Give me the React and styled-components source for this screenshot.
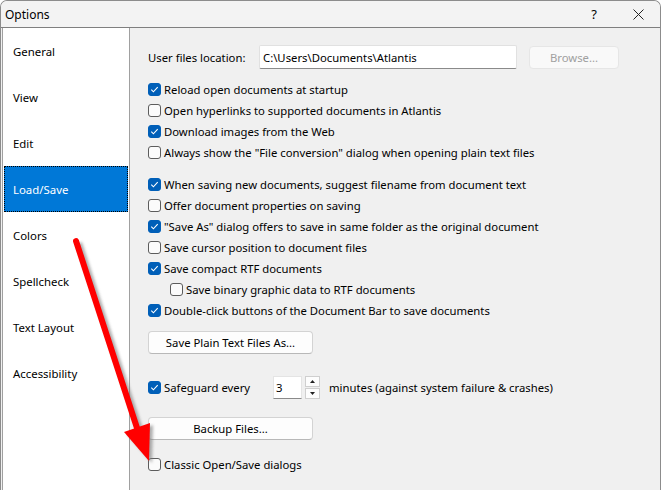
import styled, { createGlobalStyle } from "styled-components";

const GlobalStyle = createGlobalStyle`
  body {
    margin: 0;
    background: #ffffff;
    font-family: "Noto Sans", "Open Sans", sans-serif;
    font-size: 11.3px;
    color: #000;
  }
`;

const Window = styled.div`
  position: relative;
  width: 659px;
  height: 490px;
  border: 1px solid #8c8c8c;
  border-bottom: none;
  border-radius: 7px 7px 0 0;
  display: flex;
  flex-direction: column;
  overflow: hidden;
  background: #f0f0f0;
`;

const TitleBar = styled.div`
  height: 26px;
  display: flex;
  align-items: center;
  background: #f3f3f3;
  border-bottom: 1px solid #7f7f7f;
  padding-left: 4px;
  font-size: 12px;
`;

const Title = styled.span`
  flex: 1;
`;

const TitleButton = styled.div`
  width: 44px;
  height: 26px;
  display: flex;
  align-items: center;
  justify-content: center;
  font-size: 13px;
`;

const Body = styled.div`
  flex: 1;
  display: flex;
  padding-left: 1px;
`;

const Sidebar = styled.div`
  width: 126px;
  background: #ffffff;
  border-left: 1px solid #a0a0a0;
  border-right: 1px solid #a0a0a0;
  display: flex;
  flex-direction: column;
`;

const NavItem = styled.div`
  height: ${(p) => (p.$active ? "44px" : "46px")};
  display: flex;
  align-items: center;
  padding-left: ${(p) => (p.$active ? "8px" : "10px")};
  font-size: 11.4px;
  margin: ${(p) => (p.$active ? "0 1px" : "0")};
  background: ${(p) => (p.$active ? "#0078d7" : "transparent")};
  color: ${(p) => (p.$active ? "#ffffff" : "#000000")};
  border: ${(p) => (p.$active ? "1px dotted #000" : "none")};
`;

const Content = styled.div`
  flex: 1;
  padding: 17px 0 0 18px;
  display: flex;
  flex-direction: column;
`;

const LocationRow = styled.div`
  display: flex;
  align-items: center;
  height: 24px;
`;

const Label = styled.span`
  width: 111px;
  padding-top: 1px;
`;

const TextInput = styled.div`
  width: 253px;
  height: 22px;
  background: #ffffff;
  border: 1px solid #e1e1e1;
  border-bottom: 1px solid #8a8a8a;
  border-radius: 2px;
  display: flex;
  align-items: center;
  padding-left: 3px;
`;

const Browse = styled.div`
  margin-left: 12px;
  width: 88px;
  height: 21px;
  border: 1px solid #e6e6e6;
  border-radius: 4px;
  background: #f9f9f9;
  color: #a0a0a0;
  display: flex;
  align-items: center;
  justify-content: center;
`;

const Group = styled.div`
  display: flex;
  flex-direction: column;
  margin-top: ${(p) => p.$gap || 0}px;
`;

const Row = styled.label`
  display: flex;
  align-items: center;
  height: 21px;
  padding-left: ${(p) => (p.$indent ? "22px" : "0")};
`;

const Box = styled.span`
  width: 13px;
  height: 13px;
  box-sizing: border-box;
  border-radius: 3px;
  margin-right: 3px;
  flex-shrink: 0;
  display: flex;
  align-items: center;
  justify-content: center;
  background: ${(p) => (p.$checked ? "#005fb8" : "#fbfbfb")};
  border: 1px solid ${(p) => (p.$checked ? "#005fb8" : "#5c5c5c")};
`;

const Button = styled.div`
  width: 163px;
  height: 21px;
  margin-top: ${(p) => p.$gap}px;
  background: #fdfdfd;
  border: 1px solid #d3d3d3;
  border-bottom-color: #b8b8b8;
  border-radius: 4px;
  display: flex;
  align-items: center;
  justify-content: center;
`;

const SafeRow = styled.div`
  display: flex;
  align-items: center;
  height: 22px;
  margin-top: 22px;
`;

const SafeLabel = styled.label`
  display: flex;
  align-items: center;
  width: 125px;
`;

const Spin = styled.div`
  width: 25px;
  height: 21px;
  background: #ffffff;
  border: 1px solid #e4e4e4;
  border-bottom: 1px solid #8a8a8a;
  display: flex;
  align-items: center;
  padding-left: 2px;
`;

const SpinButtons = styled.div`
  margin-left: 3px;
  display: flex;
  flex-direction: column;
  gap: 1px;
`;

const SpinButton = styled.div`
  width: 13px;
  height: 9px;
  border: 1px solid #cfcfcf;
  background: #fdfdfd;
  display: flex;
  align-items: center;
  justify-content: center;
`;

const SpinText = styled.span`
  margin-left: 9px;
`;

const Overlay = styled.svg`
  position: absolute;
  left: 0;
  top: 0;
  pointer-events: none;
`;

const Check = ({ checked }) => (
  <Box $checked={checked}>
    {checked && (
      <svg width="9" height="9" viewBox="0 0 9 9">
        <path d="M1.3 4.7 L3.4 6.8 L7.7 2.2" fill="none" stroke="#fff" strokeWidth="1.1" />
      </svg>
    )}
  </Box>
);

const Option = ({ checked, indent, children }) => (
  <Row $indent={indent}>
    <Check checked={checked} />
    {children}
  </Row>
);

const nav = ["General", "View", "Edit", "Load/Save", "Colors", "Spellcheck", "Text Layout", "Accessibility"];

export default function App() {
  return (
    <>
      <GlobalStyle />
      <Window>
        <TitleBar>
          <Title>Options</Title>
          <TitleButton>?</TitleButton>
          <TitleButton>
            <svg width="11" height="11" viewBox="0 0 11 11">
              <path d="M0.5 0.5 L10.5 10.5 M10.5 0.5 L0.5 10.5" stroke="#222" strokeWidth="1" />
            </svg>
          </TitleButton>
        </TitleBar>
        <Body>
          <Sidebar>
            {nav.map((n) => (
              <NavItem key={n} $active={n === "Load/Save"}>
                {n}
              </NavItem>
            ))}
          </Sidebar>
          <Content>
            <LocationRow>
              <Label>User files location:</Label>
              <TextInput>C:\Users\Documents\Atlantis</TextInput>
              <Browse>Browse...</Browse>
            </LocationRow>
            <Group $gap={10}>
              <Option checked>Reload open documents at startup</Option>
              <Option>Open hyperlinks to supported documents in Atlantis</Option>
              <Option checked>Download images from the Web</Option>
              <Option>Always show the "File conversion" dialog when opening plain text files</Option>
            </Group>
            <Group $gap={11}>
              <Option checked>When saving new documents, suggest filename from document text</Option>
              <Option>Offer document properties on saving</Option>
              <Option checked>"Save As" dialog offers to save in same folder as the original document</Option>
              <Option>Save cursor position to document files</Option>
              <Option checked>Save compact RTF documents</Option>
              <Option indent>Save binary graphic data to RTF documents</Option>
              <Option checked>Double-click buttons of the Document Bar to save documents</Option>
            </Group>
            <Button $gap={10}>Save Plain Text Files As...</Button>
            <SafeRow>
              <SafeLabel>
                <Check checked />
                Safeguard every
              </SafeLabel>
              <Spin>3</Spin>
              <SpinButtons>
                <SpinButton>
                  <svg width="5" height="3" viewBox="0 0 5 3">
                    <path d="M0 3 L2.5 0 L5 3 Z" fill="#222" />
                  </svg>
                </SpinButton>
                <SpinButton>
                  <svg width="5" height="3" viewBox="0 0 5 3">
                    <path d="M0 0 L2.5 3 L5 0 Z" fill="#222" />
                  </svg>
                </SpinButton>
              </SpinButtons>
              <SpinText>minutes (against system failure &amp; crashes)</SpinText>
            </SafeRow>
            <Button $gap={19}>Backup Files...</Button>
            <Group $gap={14}>
              <Option>Classic Open/Save dialogs</Option>
            </Group>
          </Content>
        </Body>
        <Overlay width="662" height="490" viewBox="0 0 662 490">
          <defs>
            <filter id="blur" x="-20%" y="-20%" width="140%" height="140%">
              <feGaussianBlur stdDeviation="1.5" />
            </filter>
          </defs>
          <g transform="translate(3 2)" fill="#777" stroke="#777" opacity="0.6" filter="url(#blur)">
            <line x1="75" y1="240" x2="137" y2="430" strokeWidth="6" />
            <polygon points="123,431 149,422 148,460" stroke="none" />
          </g>
          <line x1="75" y1="240" x2="137" y2="430" stroke="#ff0000" strokeWidth="6" strokeLinecap="round" />
          <polygon points="123,431 149,422 148,460" fill="#ff0000" />
        </Overlay>
      </Window>
    </>
  );
}
